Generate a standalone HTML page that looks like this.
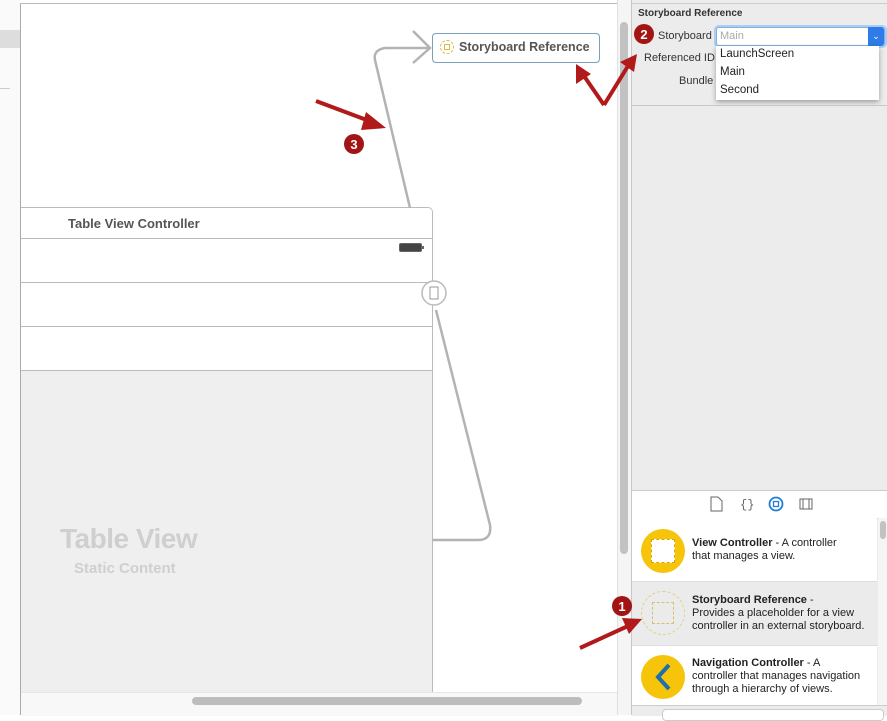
<!DOCTYPE html>
<html><head><style>
body{margin:0;width:887px;height:715px;position:relative;overflow:hidden;background:#fff;font-family:"Liberation Sans",sans-serif;}
.a{position:absolute;}
.lbl{font-size:11px;color:#333;}
.d{font-size:11px;color:#222;line-height:13px;white-space:nowrap;}
</style></head><body>
<div class="a" style="left:0;top:0;width:20px;height:715px;background:#fafafa;"></div>
<div class="a" style="left:0;top:30px;width:20px;height:18px;background:#ddd;"></div>
<div class="a" style="left:0;top:88px;width:10px;height:1px;background:#ccc;"></div>
<div class="a" style="left:20px;top:3px;width:1px;height:712px;background:#aaa;"></div>
<div class="a" style="left:20px;top:3px;width:600px;height:1px;background:#bbb;"></div>
<div class="a" style="left:21px;top:207px;width:411px;height:485px;border:1px solid #bbb;border-left:none;border-radius:0 5px 0 0;background:#fff;"></div>
<div class="a" style="left:68px;top:216px;font-size:13px;font-weight:bold;color:#555;">Table View Controller</div>
<div class="a" style="left:21px;top:238px;width:411px;height:1px;background:#bbb;"></div>
<div class="a" style="left:399px;top:243px;width:21px;height:7px;border:1px solid #666;border-radius:2px;background:#444;"></div>
<div class="a" style="left:422px;top:246px;width:2px;height:3px;background:#666;"></div>
<div class="a" style="left:21px;top:282px;width:411px;height:1px;background:#bbb;"></div>
<div class="a" style="left:21px;top:326px;width:411px;height:1px;background:#bbb;"></div>
<div class="a" style="left:21px;top:370px;width:411px;height:1px;background:#bbb;"></div>
<div class="a" style="left:21px;top:371px;width:411px;height:321px;background:#efefef;"></div>
<div class="a" style="left:21px;top:692px;width:598px;height:23px;background:#f8f8f8;border-top:1px solid #e6e6e6;"></div>
<div class="a" style="left:60px;top:523px;font-size:28px;font-weight:bold;color:#cfcfcf;letter-spacing:-0.5px;">Table View</div>
<div class="a" style="left:74px;top:560px;font-size:15px;font-weight:bold;color:#cfcfcf;">Static Content</div>
<div class="a" style="left:192px;top:697px;width:390px;height:8px;border-radius:4px;background:#bdbdbd;"></div>
<svg class="a" style="left:0;top:0" width="620" height="715">
<path d="M410 208 L375 60 Q373 50 385 48 L428 48" fill="none" stroke="#b3b3b3" stroke-width="2.5"/>
<path d="M413 31 L430 48 L413 63" fill="none" stroke="#b3b3b3" stroke-width="2.5"/>
<path d="M436 310 L490 525 Q492 540 478 540 L432 540" fill="none" stroke="#b3b3b3" stroke-width="2.5"/>
<circle cx="434" cy="293" r="12" fill="#fff" stroke="#bbb" stroke-width="1.5"/>
<rect x="430" y="287" width="8" height="12" fill="none" stroke="#999"/>
</svg>
<div class="a" style="left:432px;top:33px;width:166px;height:28px;border:1px solid #7a9fb8;border-radius:4px;background:#fff;"></div>
<div class="a" style="left:440px;top:40px;width:12px;height:12px;border:1px dashed #d8b84a;border-radius:50%;"></div>
<div class="a" style="left:444px;top:44px;width:4px;height:4px;border:1px solid #d8b84a;"></div>
<div class="a" style="left:459px;top:40px;font-size:12.5px;font-weight:bold;color:#555;">Storyboard Reference</div>
<div class="a" style="left:617px;top:0;width:14px;height:715px;background:#f5f5f5;border-left:1px solid #e0e0e0;"></div>
<div class="a" style="left:620px;top:22px;width:8px;height:532px;border-radius:4px;background:#c2c2c2;"></div>
<div class="a" style="left:631px;top:0;width:256px;height:715px;background:#ececec;border-left:1px solid #c8c8c8;"></div>
<div class="a" style="left:632px;top:0;width:255px;height:3px;border-bottom:1px solid #ccc;"></div>
<div class="a" style="left:638px;top:8px;font-size:10px;font-weight:bold;color:#333;">Storyboard Reference</div>
<div class="a lbl" style="left:658px;top:30px;">Storyboard</div>
<div class="a lbl" style="left:644px;top:52px;">Referenced ID</div>
<div class="a lbl" style="left:679px;top:75px;">Bundle</div>
<div class="a" style="left:716px;top:27px;width:167px;height:17px;background:#fff;border:1px solid #7fb0e8;box-shadow:0 0 0 2px #a9cdf3;border-radius:3px;"></div>
<div class="a" style="left:720px;top:30px;font-size:11px;color:#aaa;">Main</div>
<div class="a" style="left:868px;top:27px;width:16px;height:19px;background:#2e7ce8;border-radius:0 3px 3px 0;color:#fff;font-size:9px;text-align:center;line-height:19px;">&#8964;</div>
<div class="a" style="left:716px;top:46px;width:163px;height:54px;background:#fff;box-shadow:0 2px 5px rgba(0,0,0,.35);"></div>
<div class="a" style="left:720px;top:48px;font-size:11.5px;color:#222;">LaunchScreen</div>
<div class="a" style="left:720px;top:66px;font-size:11.5px;color:#222;">Main</div>
<div class="a" style="left:720px;top:84px;font-size:11.5px;color:#222;">Second</div>
<div class="a" style="left:632px;top:105px;width:255px;height:1px;background:#c8c8c8;"></div>
<div class="a" style="left:632px;top:490px;width:255px;height:27px;background:#fff;border-top:1px solid #ccc;border-bottom:1px solid #ccc;"></div>
<svg class="a" style="left:700px;top:495px" width="120" height="18">
<path d="M11 2 h7 l4 4 v10 h-11 z" fill="none" stroke="#666"/>
<text x="40" y="13" font-size="12" fill="#666" font-family="Liberation Mono">{}</text>
<circle cx="76" cy="9" r="6.5" fill="none" stroke="#1f7fd6" stroke-width="1.8"/><rect x="73.5" y="6.5" width="5" height="5" fill="none" stroke="#1f7fd6" stroke-width="1.3"/>
<rect x="100" y="4" width="12" height="10" fill="none" stroke="#666"/><path d="M103 4v10M109 4v10" stroke="#666"/>
</svg>
<div class="a" style="left:632px;top:518px;width:245px;height:197px;background:#fff;"></div>
<div class="a" style="left:632px;top:581px;width:245px;height:63px;background:#ebebeb;border-top:1px solid #ddd;border-bottom:1px solid #ddd;"></div>
<div class="a" style="left:878px;top:518px;width:9px;height:197px;background:#f5f5f5;"></div>
<div class="a" style="left:880px;top:521px;width:6px;height:18px;border-radius:3px;background:#c2c2c2;"></div>
<div class="a" style="left:641px;top:529px;width:44px;height:44px;border-radius:50%;background:#f6c40a;"></div>
<div class="a" style="left:651px;top:539px;width:22px;height:22px;background:#fff;border:1px dashed #d6a800;"></div>
<div class="a" style="left:641px;top:591px;width:42px;height:42px;border-radius:50%;border:1px dashed #e0d08a;"></div>
<div class="a" style="left:652px;top:602px;width:20px;height:20px;border:1px dashed #d8c070;"></div>
<div class="a" style="left:641px;top:655px;width:44px;height:44px;border-radius:50%;background:#f6c40a;"></div>
<svg class="a" style="left:641px;top:655px" width="44" height="44"><path d="M28 10 L17 22 L28 34" fill="none" stroke="#1d6fae" stroke-width="4"/></svg>
<div class="a d" style="left:692px;top:537px;"><b>View Controller</b> - A controller<br>that manages a view.</div>
<div class="a d" style="left:692px;top:594px;"><b>Storyboard Reference</b> -<br>Provides a placeholder for a view<br>controller in an external storyboard.</div>
<div class="a d" style="left:692px;top:657px;"><b>Navigation Controller</b> - A<br>controller that manages navigation<br>through a hierarchy of views.</div>
<div class="a" style="left:632px;top:705px;width:255px;height:10px;background:#ececec;border-top:1px solid #ccc;"></div>
<div class="a" style="left:662px;top:709px;width:220px;height:10px;border:1px solid #ccc;border-radius:4px;background:#fff;"></div>
<svg class="a" style="left:0;top:0" width="887" height="715">
<path d="M316 101 L372 122" stroke="#b01a1a" stroke-width="4" fill="none"/>
<path d="M386 128 L366 112 L361 130 Z" fill="#b01a1a"/>
<circle cx="354" cy="144" r="10" fill="#a31515"/>
<text x="354" y="149" font-size="13" font-weight="bold" fill="#fff" text-anchor="middle" font-family="Liberation Sans">3</text>
<path d="M604 105 L584 76" stroke="#b01a1a" stroke-width="4"/>
<path d="M576 64 L576 84 L591 74 Z" fill="#b01a1a"/>
<path d="M604 105 L628 66" stroke="#b01a1a" stroke-width="4"/>
<path d="M637 54 L620 62 L634 72 Z" fill="#b01a1a"/>
<circle cx="644" cy="34" r="10" fill="#a31515"/>
<text x="644" y="39" font-size="13" font-weight="bold" fill="#fff" text-anchor="middle" font-family="Liberation Sans">2</text>
<path d="M580 648 L628 626" stroke="#b01a1a" stroke-width="4"/>
<path d="M642 619 L622 618 L629 634 Z" fill="#b01a1a"/>
<circle cx="622" cy="606" r="10" fill="#a31515"/>
<text x="622" y="611" font-size="13" font-weight="bold" fill="#fff" text-anchor="middle" font-family="Liberation Sans">1</text>
</svg>
</body></html>
